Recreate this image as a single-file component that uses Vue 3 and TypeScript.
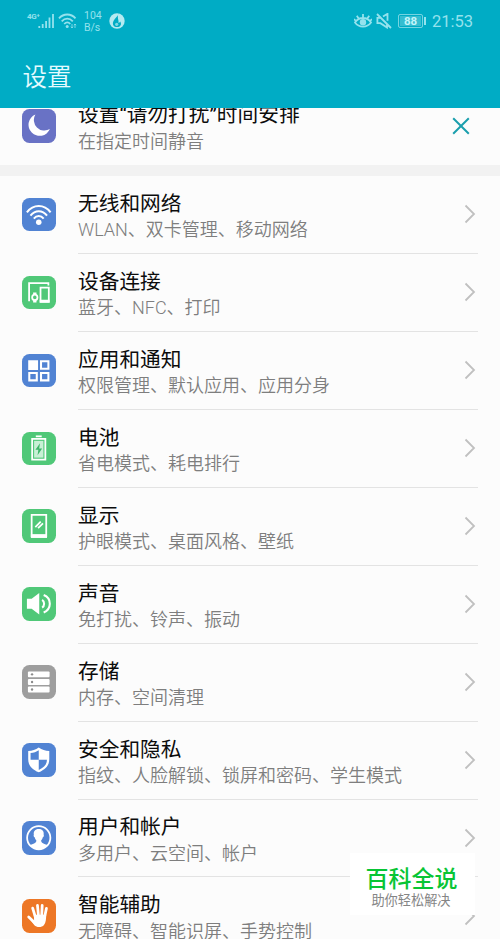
<script setup lang="ts">
type IconName =
  | 'wifi' | 'devices' | 'apps' | 'battery' | 'display'
  | 'sound' | 'storage' | 'shield' | 'user' | 'hand'

interface SettingItem {
  icon: IconName
  tone: 'blue' | 'green' | 'gray' | 'orange'
  title: string
  summary: string
}

const items: SettingItem[] = [
  { icon: 'wifi', tone: 'blue', title: '无线和网络', summary: 'WLAN、双卡管理、移动网络' },
  { icon: 'devices', tone: 'green', title: '设备连接', summary: '蓝牙、NFC、打印' },
  { icon: 'apps', tone: 'blue', title: '应用和通知', summary: '权限管理、默认应用、应用分身' },
  { icon: 'battery', tone: 'green', title: '电池', summary: '省电模式、耗电排行' },
  { icon: 'display', tone: 'green', title: '显示', summary: '护眼模式、桌面风格、壁纸' },
  { icon: 'sound', tone: 'green', title: '声音', summary: '免打扰、铃声、振动' },
  { icon: 'storage', tone: 'gray', title: '存储', summary: '内存、空间清理' },
  { icon: 'shield', tone: 'blue', title: '安全和隐私', summary: '指纹、人脸解锁、锁屏和密码、学生模式' },
  { icon: 'user', tone: 'blue', title: '用户和帐户', summary: '多用户、云空间、帐户' },
  { icon: 'hand', tone: 'orange', title: '智能辅助', summary: '无障碍、智能识屏、手势控制' },
]
</script>

<template>
  <div class="screen">
    <header class="top">
      <div class="status">
        <div class="status-left">
          <span class="net">4G<sup>+</sup></span>
          <svg class="signal" width="17" height="16" viewBox="0 0 17 16">
            <path d="M1.300 13v2M4.700 11v4M8.100 8v7M11.500 4.500v10.500M15 1v14" />
          </svg>
          <svg class="wlan" width="19" height="16" viewBox="0 0 19 16">
            <path d="M1 5.300C5.500 .200 13 .200 17.500 5.300M3.700 8.300C7 4.600 11.500 4.600 14.800 8.300M6.200 11C8.300 8.800 10.300 8.800 12.300 11" />
            <circle cx="9.200" cy="13.600" r="1.500" />
            <path class="thin" d="M14 11v4M12.900 13.700 14 15l1.100-1.300M17 15v-4M15.900 12.200 17 11l1.100 1.200" />
          </svg>
          <span class="speed"><span>104</span><span>B/s</span></span>
          <svg class="flame" width="16" height="16" viewBox="0 0 16 16">
            <circle cx="8" cy="8" r="7.700" />
            <path d="M9.300 0C9.800 3 6.300 4.500 4.400 8.200c-1.500 3.300.5 5.900 3.600 5.900 3.600 0 5-3.200 3.200-5.700-.5 1-1.100 1.300-1.800 1.300C10.200 7 8 6.500 9.300 0Z" />
            <circle cx="7.700" cy="11.300" r="1.600" />
          </svg>
        </div>
        <div class="status-right">
          <svg class="eye" width="18" height="16" viewBox="0 0 18 16">
            <path d="M1 9.500C5 3.500 13 3.500 17 9.500 13 15 5 15 1 9.500ZM9 4.600V1M4.800 5.700 2.800 2.700M13.200 5.700l2-3M1.900 8 0 6M16.100 8 18 6" />
            <circle cx="9" cy="9.200" r="3.200" />
          </svg>
          <svg class="mute" width="16" height="16" viewBox="0 0 16 16">
            <path d="M1 1l14 14M4.500 4.800H1.400v5.400h3l6.600 4.300v-3M7 3.600 11.500.8v7" />
          </svg>
          <span class="charge"><span class="cell">88</span><i /></span>
          <span class="clock">21:53</span>
        </div>
      </div>
      <h1>设置</h1>
    </header>

    <section class="suggestion">
      <span class="icon violet">
        <svg width="33.500" height="33.500" viewBox="0 0 34 34">
          <path class="fill" d="M13.600 5.500A11.300 11.300 0 1 0 28.300 20.400 10.800 10.800 0 0 1 13.600 5.500Z" />
        </svg>
      </span>
      <div class="copy">
        <h2>设置“请勿打扰”时间安排</h2>
        <p>在指定时间静音</p>
      </div>
      <svg class="close" width="18" height="18" viewBox="0 0 18 18"><path d="M1.200 1.200l15.600 15.600M16.800 1.200 1.200 16.800" /></svg>
    </section>

    <main class="list">
      <div v-for="item in items" :key="item.title" class="row">
        <span class="icon" :class="item.tone">
          <svg width="33.500" height="33.500" viewBox="0 0 34 34">
            <g v-if="item.icon === 'wifi'">
              <path class="line bold" d="M5 14.500C11.500 6 22.500 6 29 14.500M8.600 17.800c4.700-5.800 12.100-5.800 16.800 0M12 20.900c2.900-3.400 7.100-3.400 10 0" />
              <circle class="fill" cx="17" cy="24.700" r="2.800" />
            </g>
            <g v-else-if="item.icon === 'devices'">
              <path class="line" d="M7.200 25.500V7.200h19.600v2.500" />
              <path class="line" d="M18.800 11.800h8.400v14.400h-8.400z" />
              <path class="fill" d="M18 24h10v3H18zM11.300 16.700h3.400v2.300h-3.400zM11.300 24h3.400v3h-3.400z" />
              <circle class="line" cx="13" cy="21.700" r="2.700" />
            </g>
            <g v-else-if="item.icon === 'apps'">
              <path class="fill" d="M6.300 6.300h10v10h-10z" />
              <path class="line bold" d="M19.300 7.400h7.500V15h-7.500zM7.400 19.300H15v7.500H7.400zM19.300 19.300h7.500v7.500h-7.500z" />
            </g>
            <g v-else-if="item.icon === 'battery'">
              <path class="fill" d="M14 3.500h6v1.800h-6z" />
              <path class="line" d="M10.300 7h13.400v21H10.300z" />
              <path class="glaze" d="M12.300 9h9.400v17h-9.400z" />
              <path class="green-fill" d="M18.300 11.500 13.600 18h3l-.8 5.700 4.600-7h-3z" />
            </g>
            <g v-else-if="item.icon === 'display'">
              <path class="line" d="M9.800 6h14.800v21.500H9.800z" />
              <path class="fill" d="M9 25.500h16.400v3.900H9z" />
              <path class="line" d="m13.500 18.300 5.500-5.500M16.300 19.500l5-5" />
            </g>
            <g v-else-if="item.icon === 'sound'">
              <path class="fill" d="M5 12h4.800L17.500 6v22l-7.700-6H5z" />
              <path class="line bold" d="M20.400 13c2.700 1.600 2.700 6.400 0 8M22 8.200c8.300 3.300 8.300 14.300 0 17.600" />
            </g>
            <g v-else-if="item.icon === 'storage'">
              <rect class="fill" x="6" y="6.500" width="22" height="6" rx="1" />
              <rect class="fill" x="6" y="14.200" width="22" height="6" rx="1" />
              <rect class="fill" x="6" y="21.900" width="22" height="6" rx="1" />
              <g class="gray-fill">
                <circle cx="10.200" cy="9.500" r="1.200" />
                <circle cx="10.200" cy="17.200" r="1.200" />
                <circle cx="10.200" cy="24.900" r="1.200" />
              </g>
            </g>
            <g v-else-if="item.icon === 'shield'">
              <path class="fill" d="M17 4.500c3.200 2.300 6.700 3.500 10.700 3.700v8.400c0 6-3.900 10.300-10.700 13.200C10.200 26.900 6.300 22.600 6.300 16.600V8.200C10.300 8 13.800 6.800 17 4.500Z" />
              <path class="blue-fill" d="M17 7.300V17H8.700v-6.800c3.200-.3 5.900-1.300 8.300-2.900ZM17 17h8.300c0 4.700-2.900 7.900-8.300 10.300z" />
            </g>
            <g v-else-if="item.icon === 'user'">
              <circle class="line" cx="17" cy="17" r="11.800" />
              <path class="fill" d="M17 8c-3.900 0-5.500 2.500-5 5.900-.5.900 0 2.300.9 2.600.3 1.600.8 2.400 1.700 3.200 0 2.200-1.700 2.800-6.500 4.700 4.200 6 13.600 6 17.800 0-4.800-1.900-6.500-2.500-6.500-4.700.9-.8 1.400-1.600 1.700-3.200.9-.3 1.400-1.700.9-2.600.5-3.400-1.100-5.900-5-5.900Z" />
            </g>
            <g v-else>
              <path class="finger" d="M13.500 18 10.800 9.200M16.700 17 15.700 6.500M20 17 20.500 6.500M23 18 24.800 9.500M13 24 6.800 18.300" />
              <path class="fill" d="M12 16h12.500c0 4.800-.2 7.600-2.200 10.400-2.100 2.800-7.500 2.800-9.700.3L8.500 21.200l3.800.5z" />
            </g>
          </svg>
        </span>
        <div class="body">
          <div class="copy">
            <h2>{{ item.title }}</h2>
            <p>{{ item.summary }}</p>
          </div>
          <svg class="chevron" width="12" height="20" viewBox="0 0 12 20"><path d="M1.500 1.500 10 10l-8.500 8.500" /></svg>
        </div>
      </div>
    </main>

    <aside class="badge">
      <strong>百科全说</strong>
      <span>助你轻松解决</span>
    </aside>
  </div>
</template>

<style>
body {
  margin: 0;
  overflow: hidden;
}
</style>

<style scoped>
.screen {
  position: relative;
  display: flex;
  flex-direction: column;
  width: 500px;
  height: 939px;
  overflow: hidden;
  background: #fcfcfc;
  font-family: Roboto, "Noto Sans CJK SC", sans-serif;
}
svg {
  display: block;
  flex: none;
  fill: none;
}
h1, h2, p {
  margin: 0;
  font-weight: 400;
  white-space: nowrap;
}
.top {
  box-sizing: border-box;
  flex: none;
  height: 108px;
  background: #00acc5;
  color: #e5fbff;
  z-index: 1;
}
.status {
  display: flex;
  justify-content: space-between;
  height: 42px;
  padding: 0 27px 0 27px;
  color: #94e2ed;
}
.status-left, .status-right {
  display: flex;
  align-items: center;
}
.status svg {
  stroke: currentColor;
  stroke-width: 1.800;
}
.net {
  align-self: flex-start;
  width: 11px;
  margin-top: 12px;
  font-size: 8px;
  font-weight: 700;
  line-height: 9px;
  letter-spacing: -0.300px;
  white-space: nowrap;
}
.net sup {
  font-size: 6px;
  line-height: 0;
  vertical-align: 2px;
}
.wlan {
  margin-left: 3px;
}
.wlan circle {
  fill: currentColor;
  stroke: none;
}
.wlan .thin {
  stroke-width: 0.800;
}
.speed {
  display: flex;
  flex-direction: column;
  width: 18px;
  margin: 2px 0 0 7px;
  font-size: 10.500px;
  line-height: 12.500px;
}
.flame {
  margin-left: 7px;
}
.status .flame {
  stroke: none;
  fill: #b4eaf1;
}
.status .flame path {
  fill: #00acc5;
}
.status .flame circle:last-child {
  fill: #7fd6e2;
}
.eye circle {
  fill: currentColor;
  stroke: none;
}
.mute {
  margin-left: 4px;
}
.charge {
  display: flex;
  align-items: center;
  gap: 1px;
  margin-left: 6px;
}
.cell {
  box-sizing: border-box;
  width: 25px;
  height: 14px;
  border: 1px solid #75d4e1;
  border-radius: 2px;
  background: #35bdd0;
  box-shadow: inset 0 0 0 1px #00acc5;
  color: #c4f5fa;
  font-size: 11.500px;
  font-weight: 700;
  line-height: 12.500px;
  text-align: center;
}
.charge i {
  width: 2px;
  height: 8px;
  background: #94e2ed;
}
.clock {
  width: 41px;
  margin: 2px 0 0 6px;
  font-size: 16.500px;
  line-height: 20px;
}
h1 {
  padding: 17px 0 0 22.500px;
  font-size: 24.500px;
  font-weight: 350;
  line-height: 38px;
}
.suggestion {
  box-sizing: border-box;
  display: flex;
  flex: none;
  align-items: flex-start;
  height: 68px;
  border-bottom: 11px solid #f2f2f2;
  padding-left: 22px;
}
.suggestion .icon {
  margin-top: 1px;
}
.suggestion .copy {
  width: 223px;
  margin: -6px 0 0 22.500px;
}
.close {
  margin: 9px 0 0 151px;
  stroke: #1b9fad;
  stroke-width: 2;
}
.row {
  display: flex;
  align-items: center;
  height: 77.950px;
  padding: 0 22px;
}
.icon {
  flex: none;
  width: 33.500px;
  height: 33.500px;
  border-radius: 7.500px;
}
.row .icon {
  margin-bottom: 1px;
}
.blue { background: #5183d3; }
.green { background: #50c878; }
.gray { background: #9e9e9e; }
.orange { background: #ed7726; }
.violet { background: #6972c5; }
.fill { fill: #fff; }
.glaze { fill: #c8f0d5; }
.green-fill { fill: #3eb76a; }
.blue-fill { fill: #5183d3; }
.gray-fill { fill: #8c8c8c; }
.line {
  stroke: #fff;
  stroke-width: 1.800;
}
.line.bold {
  stroke-width: 2.100;
}
.finger {
  stroke: #fff;
  stroke-width: 2.800;
  stroke-linecap: round;
}
.body {
  box-sizing: border-box;
  display: flex;
  flex: 1;
  align-items: center;
  justify-content: space-between;
  height: 100%;
  margin-left: 22.500px;
  border-bottom: 1px solid #e3e3e3;
  padding-right: 2.500px;
}
.body .copy {
  padding-top: 5px;
}
h2 {
  color: #0c0c0c;
  font-size: 20.700px;
  line-height: 27.500px;
}
p {
  color: #7e7e7e;
  font-size: 18px;
  font-weight: 350;
  line-height: 24.500px;
}
.chevron {
  stroke: #c0c0c0;
  stroke-width: 1.800;
}
.badge {
  position: absolute;
  left: 350px;
  top: 853px;
  display: flex;
  flex-direction: column;
  align-items: center;
  box-sizing: border-box;
  width: 125px;
  height: 62px;
  padding: 13px 0 0 0;
  background: #fff;
}
.badge strong {
  margin-left: -2px;
  color: #08c535;
  font-size: 23px;
  font-weight: 500;
  line-height: 27px;
}
.badge span {
  color: #858585;
  font-size: 13.200px;
  line-height: 16px;
  margin-left: -3px;
}
</style>
